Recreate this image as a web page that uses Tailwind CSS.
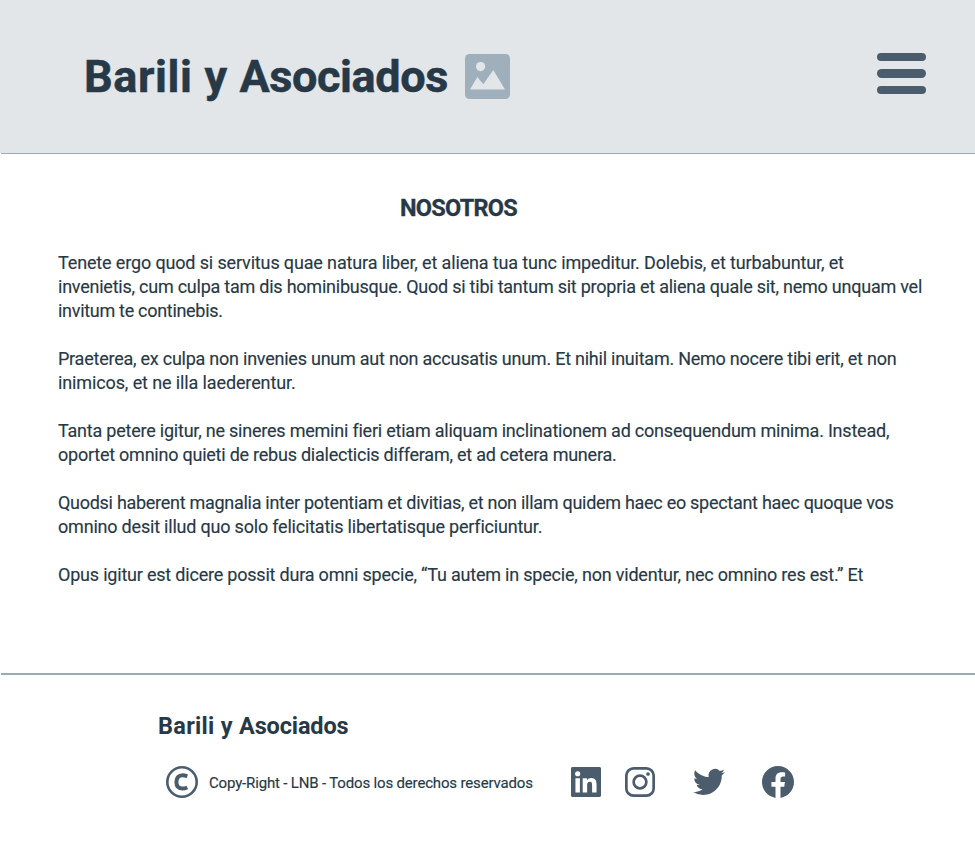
<!DOCTYPE html>
<html lang="es">
<head>
<meta charset="utf-8">
<title>Barili y Asociados</title>
<script src="https://cdn.jsdelivr.net/npm/@tailwindcss/browser@4"></script>
</head>
<body class="flex h-[851px] w-[975px] flex-col overflow-hidden bg-white font-['Roboto',sans-serif] text-[#273947]">
<header class="flex h-[153px] shrink-0 items-center justify-between bg-[#e2e6e9] pr-[49px] pl-[84px]">
  <div class="flex items-center">
    <h1 class="w-[381px] text-[45px] leading-[52px] font-bold whitespace-nowrap [-webkit-text-stroke:0.5px_#273947]"><span class="tracking-[0.6px]">Barili y </span><span class="tracking-[-0.4px]">Asociados</span></h1>
    <svg class="size-[45px]" viewBox="0 0 45 45"><rect width="45" height="45" rx="4.5" fill="#9fafbc"/><circle cx="15.6" cy="12.6" r="4.6" fill="#e2e6e9"/><path d="M5 35.5 12.3 23l6 7.3L28.3 16 40 35.5Z" fill="#e2e6e9"/></svg>
  </div>
  <button class="mb-[6px] flex w-[49px] flex-col gap-[8px]" aria-label="Menú">
    <span class="h-[8.4px] rounded-full bg-[#4b5d6c]"></span>
    <span class="h-[8.4px] rounded-full bg-[#4b5d6c]"></span>
    <span class="h-[8.4px] rounded-full bg-[#4b5d6c]"></span>
  </button>
</header>
<main class="ml-px h-[522px] shrink-0 border-t border-b-2 border-t-[#9aabb8] border-b-[#9aabb8] pl-[57px]">
  <h2 class="mt-[39px] pl-[342px] text-[23.5px] leading-[30px] font-bold tracking-[-0.75px] [-webkit-text-stroke:0.3px_#273947]">NOSOTROS</h2>
  <div class="mt-[28px] flex flex-col gap-6 text-[18px] leading-6 whitespace-nowrap [-webkit-text-stroke:0.15px_#273947]">
    <p>
      <span class="block tracking-[-0.144px]">Tenete ergo quod si servitus quae natura liber, et aliena tua tunc impeditur. Dolebis, et turbabuntur, et</span>
      <span class="block tracking-[-0.238px]">invenietis, cum culpa tam dis hominibusque. Quod si tibi tantum sit propria et aliena quale sit, nemo unquam vel</span>
      <span class="block tracking-[-0.3px]">invitum te continebis.</span>
    </p>
    <p>
      <span class="block tracking-[-0.24px]">Praeterea, ex culpa non invenies unum aut non accusatis unum. Et nihil inuitam. Nemo nocere tibi erit, et non</span>
      <span class="block tracking-[-0.12px]">inimicos, et ne illa laederentur.</span>
    </p>
    <p>
      <span class="block tracking-[-0.22px]">Tanta petere igitur, ne sineres memini fieri etiam aliquam inclinationem ad consequendum minima. Instead,</span>
      <span class="block tracking-[-0.235px]">oportet omnino quieti de rebus dialecticis differam, et ad cetera munera.</span>
    </p>
    <p>
      <span class="block tracking-[-0.282px]">Quodsi haberent magnalia inter potentiam et divitias, et non illam quidem haec eo spectant haec quoque vos</span>
      <span class="block tracking-[-0.205px]">omnino desit illud quo solo felicitatis libertatisque perficiuntur.</span>
    </p>
    <p>
      <span class="block tracking-[-0.205px]">Opus igitur est dicere possit dura omni specie, “Tu autem in specie, non videntur, nec omnino res est.” Et</span>
    </p>
  </div>
</main>
<footer class="pt-[36px] pl-[157px]">
  <h2 class="pl-px text-[23.5px] leading-[30px] font-bold"><span class="tracking-[0.3px]">Barili y </span><span class="tracking-[-0.15px]">Asociados</span></h2>
  <div class="mt-[25px] flex items-center pl-[9px] text-[#4b5d6c]">
    <svg class="size-8" viewBox="0 0 32 32" fill="none" stroke="currentColor"><circle cx="16" cy="16" r="14.7" stroke-width="2.6"/><path d="M21.3 10.3C19.4 9.6 17.8 9.3 16.6 9.3c-4.2 0-6.2 2.7-6.2 6.8s2 6.5 6.1 6.500c1.3 0 3-.3 4.8-1.100" stroke-width="4"/></svg>
    <p class="mt-[2px] ml-[11px] w-[362px] text-[15px] leading-6 tracking-[-0.165px] whitespace-nowrap text-[#273947] [-webkit-text-stroke:0.15px_#273947]">Copy-Right - LNB - Todos los derechos reservados</p>
    <svg class="size-[30px]" viewBox="0 0 24 24" fill="currentColor"><path d="M20.447 20.452h-3.554v-5.569c0-1.328-.027-3.037-1.852-3.037-1.853 0-2.136 1.445-2.136 2.939v5.667H9.351V9h3.414v1.561h.046c.477-.9 1.637-1.85 3.37-1.85 3.601 0 4.267 2.37 4.267 5.455v6.286zM5.337 7.433a2.062 2.062 0 0 1-2.063-2.065 2.064 2.064 0 1 1 2.063 2.065zm1.782 13.019H3.555V9h3.564v11.452zM22.8 0H1.2C.54 0 0 .54 0 1.2v21.6C0 23.460.54 24 1.2 24h21.6c.66 0 1.2-.54 1.2-1.2V1.2C24 .54 23.460 0 22.8 0z"/></svg>
    <svg class="ml-[24px] size-[30px]" viewBox="0 0 30 30" fill="none" stroke="currentColor" stroke-width="2.7"><rect x="1.35" y="1.35" width="27.3" height="27.3" rx="7.2"/><circle cx="15" cy="15" r="6.35"/><circle cx="23" cy="7" r="1.85" fill="currentColor" stroke="none"/></svg>
    <svg class="ml-[38px] size-8" viewBox="0 0 24 24" fill="currentColor"><path d="M23.953 4.570a10 10 0 0 1-2.825.775 4.958 4.958 0 0 0 2.163-2.723c-.951.555-2.005.959-3.127 1.184a4.920 4.920 0 0 0-8.384 4.482C7.690 8.095 4.067 6.130 1.640 3.162a4.822 4.822 0 0 0-.666 2.475c0 1.710.870 3.213 2.188 4.096a4.904 4.904 0 0 1-2.228-.616v.060a4.923 4.923 0 0 0 3.946 4.827 4.996 4.996 0 0 1-2.212.085 4.936 4.936 0 0 0 4.604 3.417 9.867 9.867 0 0 1-6.102 2.105c-.39 0-.779-.023-1.170-.067a13.995 13.995 0 0 0 7.557 2.209c9.053 0 13.998-7.496 13.998-13.985 0-.210 0-.420-.015-.630A9.935 9.935 0 0 0 24 4.590z"/></svg>
    <svg class="ml-[37px] size-8" viewBox="0 0 24 24" fill="currentColor"><path d="M24 12.073c0-6.627-5.373-12-12-12s-12 5.373-12 12c0 5.990 4.388 10.954 10.125 11.854v-8.385H7.078v-3.470h3.047V9.430c0-3.007 1.792-4.669 4.533-4.669 1.312 0 2.686.235 2.686.235v2.953H15.830c-1.491 0-1.956.925-1.956 1.874v2.250h3.328l-.532 3.470h-2.796v8.385C19.612 23.027 24 18.062 24 12.073z"/></svg>
  </div>
</footer>
</body>
</html>
